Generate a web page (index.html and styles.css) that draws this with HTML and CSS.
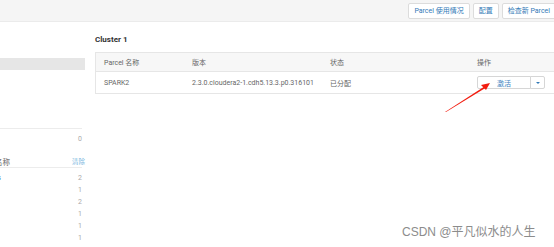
FILE: index.html
```html
<!DOCTYPE html>
<html lang="zh">
<head>
<meta charset="utf-8">
<link rel="stylesheet" href="styles.css">
</head>
<body>
<div class="page">
  <header class="topbar">
    <button class="btn">Parcel 使用情况</button>
    <button class="btn">配置</button>
    <button class="btn">检查新 Parcel</button>
  </header>
  <div class="layout">
    <aside class="sidebar">
      <div class="selected-bar"></div>
      <div class="side-row first"><span></span><span class="num">0</span></div>
      <div class="side-head"><span class="side-title">名称</span><a class="clear">清除</a></div>
      <div class="side-row"><a class="cut-link">hdfs</a><span class="num">2</span></div>
      <div class="side-row"><span></span><span class="num">1</span></div>
      <div class="side-row"><span></span><span class="num">2</span></div>
      <div class="side-row"><span></span><span class="num">1</span></div>
      <div class="side-row"><span></span><span class="num">1</span></div>
      <div class="side-row"><span></span><span class="num">1</span></div>
      <div class="side-row"><span></span><span class="num">1</span></div>
    </aside>
    <main class="main">
      <h2 class="cluster">Cluster 1</h2>
      <table class="parcels">
        <thead>
          <tr><th class="c1">Parcel 名称</th><th class="c2">版本</th><th class="c3">状态</th><th>操作</th></tr>
        </thead>
        <tbody>
          <tr>
            <td>SPARK2</td>
            <td>2.3.0.cloudera2-1.cdh5.13.3.p0.316101</td>
            <td>已分配</td>
            <td><div class="btn-group"><button class="act">激活</button><button class="caret"><span class="tri"></span></button></div></td>
          </tr>
        </tbody>
      </table>
    </main>
  </div>
  <svg class="arrow" width="60" height="40" viewBox="0 0 60 40">
    <polygon points="0,33 41,6.5 42,8 1,33" fill="#f21c0f"/>
    <polygon points="45,4 36,6 41,11" fill="#f21c0f"/>
  </svg>
  <div class="watermark">CSDN @平凡似水的人生</div>
</div>
</body>
</html>
```
FILE: styles.css
```css
html, body {
  margin: 0;
  padding: 0;
  overflow: hidden;
  background: #fff;
}
.page {
  position: relative;
  width: 556px;
  height: 247px;
  font-family: Roboto, "Noto Sans CJK SC", sans-serif;
  font-size: 7px;
  color: #666;
}
.topbar {
  height: 22px;
  background: #f5f5f5;
  border-bottom: 1px solid #ebebeb;
  box-sizing: border-box;
  display: flex;
  justify-content: flex-end;
  align-items: flex-start;
  gap: 3px;
  padding-top: 3px;
}
.btn {
  height: 16px;
  padding: 0 5px;
  background: #fff;
  border: 1px solid #dcdcdc;
  border-radius: 2px;
  font-family: Roboto, "Noto Sans CJK SC", sans-serif;
  font-size: 7px;
  color: #337ab7;
  line-height: 14px;
}
.layout {
  display: grid;
  grid-template-columns: 85px 1fr;
  column-gap: 10px;
}
.sidebar {
  padding-top: 36px;
}
.selected-bar {
  height: 12px;
  background: #e6e6e6;
}
.side-row {
  width: 82px;
  height: 12px;
  display: flex;
  justify-content: space-between;
  align-items: center;
  box-sizing: border-box;
}
.side-row.first {
  margin-top: 58px;
  border-top: 1px solid #ececec;
  height: 18px;
  padding-top: 3px;
}
.num {
  color: #aaa;
  font-size: 7px;
}
.side-head {
  margin-top: 9px;
  width: 85px;
  display: flex;
  justify-content: space-between;
  align-items: center;
  height: 12px;
  box-sizing: border-box;
}
.side-title {
  margin-left: -5px;
  color: #666;
  font-size: 7.5px;
}
.clear {
  color: #7db8e0;
  font-size: 6.5px;
}
.side-head + .side-row {
  border-top: 1px solid #ececec;
  height: 17px;
  padding-top: 4px;
}
.cut-link {
  margin-left: -13px;
  color: #337ab7;
}
.main {
  padding-top: 13px;
}
.cluster {
  margin: 0;
  height: 17px;
  font-size: 8px;
  font-weight: 700;
  color: #333;
  line-height: 10px;
}
.parcels {
  width: 461px;
  border-collapse: collapse;
  border: 1px solid #e6e6e6;
}
.parcels th,
.parcels td {
  text-align: left;
  padding: 0 0 0 8px;
  font-weight: 400;
  white-space: nowrap;
}
.parcels th {
  height: 18px;
  background: #f7f7f7;
  border-bottom: 1px solid #e6e6e6;
  color: #666;
}
.parcels td {
  height: 21px;
  color: #666;
}
.c1 { width: 80px; }
.c2 { width: 130px; }
.c3 { width: 139px; }
.btn-group {
  display: flex;
  width: 68px;
  height: 13px;
}
.act,
.caret {
  background: #fff;
  border: 1px solid #d6d6d6;
  height: 13px;
  padding: 0;
  font-family: Roboto, "Noto Sans CJK SC", sans-serif;
  font-size: 7px;
  color: #3b82c0;
}
.act {
  width: 54px;
  border-radius: 2px 0 0 2px;
}
.caret {
  width: 15px;
  margin-left: -1px;
  border-radius: 0 2px 2px 0;
  display: flex;
  align-items: center;
  justify-content: center;
}
.tri {
  width: 0;
  height: 0;
  border-left: 2.5px solid transparent;
  border-right: 2.5px solid transparent;
  border-top: 2.5px solid #337ab7;
}
.arrow {
  position: absolute;
  left: 445px;
  top: 79px;
}
.watermark {
  position: absolute;
  left: 402px;
  top: 222px;
  font-family: "Liberation Sans", "Noto Sans CJK SC", sans-serif;
  font-size: 12px;
  color: #8c8c8c;
  white-space: nowrap;
}
```
